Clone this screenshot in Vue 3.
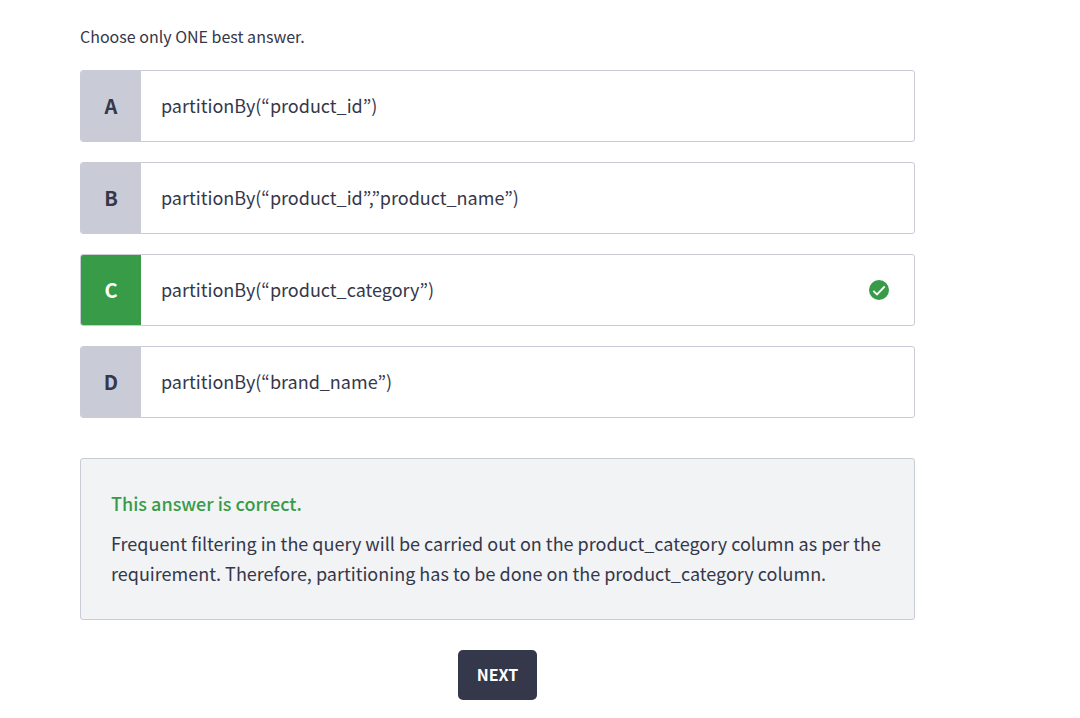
<script setup>
import { ref } from 'vue'

const selected = ref('C')
const correct = 'C'
const options = [
  { key: 'A', text: 'partitionBy(“product_id”)' },
  { key: 'B', text: 'partitionBy(“product_id”,”product_name”)' },
  { key: 'C', text: 'partitionBy(“product_category”)' },
  { key: 'D', text: 'partitionBy(“brand_name”)' }
]
</script>

<template>
  <form class="quiz" @submit.prevent>
    <fieldset class="options">
      <legend class="hint">Choose only ONE best answer.</legend>
      <label
        v-for="option in options"
        :key="option.key"
        class="option"
        :class="{ correct: option.key === correct }"
      >
        <input v-model="selected" class="radio" type="radio" name="answer" :value="option.key" />
        <span class="letter">{{ option.key }}</span>
        <span class="text">{{ option.text }}</span>
        <svg v-if="option.key === correct" class="check" viewBox="0 0 20 20" aria-hidden="true">
          <circle cx="10" cy="10" r="10" />
          <path d="M4.3 10.8 8 14.4 15.7 6.5" />
        </svg>
      </label>
    </fieldset>

    <section class="explanation">
      <h2 class="verdict">This answer is correct.</h2>
      <p class="reason">
        Frequent filtering in the query will be carried out on the product_category column as per the
        requirement. Therefore, partitioning has to be done on the product_category column.
      </p>
    </section>

    <button class="next" type="submit">NEXT</button>
  </form>
</template>

<style>
body {
  margin: 0;
  background: #fff;
}
</style>

<style scoped>
.quiz {
  box-sizing: border-box;
  display: flex;
  flex-direction: column;
  padding: 24px 165px 18px 80px;
  font-family: "Noto Sans CJK KR", "Noto Sans", sans-serif;
  font-size: 18px;
  line-height: 30px;
  color: #35374a;
}

.options {
  display: flex;
  flex-direction: column;
  gap: 20px;
  min-width: 0;
  margin: 0;
  padding: 0;
  border: 0;
}

.hint {
  padding: 0 0 22px;
  font-size: 16px;
  line-height: 24px;
}

.option {
  position: relative;
  display: flex;
  align-items: center;
  min-height: 70px;
  border: 1px solid #c9ccd6;
  border-radius: 3px;
  cursor: pointer;
}

.radio {
  position: absolute;
  width: 1px;
  height: 1px;
  margin: 0;
  opacity: 0;
}

.option:has(.radio:focus-visible) {
  outline: 2px solid #35374a;
}

.letter {
  display: flex;
  align-items: center;
  justify-content: center;
  align-self: stretch;
  width: 60px;
  border-radius: 2px 0 0 2px;
  background: #c9ccd6;
  font-size: 20px;
  font-weight: 700;
}

.correct .letter {
  background: #389b48;
  color: #fff;
}

.text {
  flex: 1;
  padding: 0 20px 2px;
}

.check {
  width: 20px;
  height: 20px;
  margin-right: 25px;
}

.check circle {
  fill: #389b48;
}

.check path {
  fill: none;
  stroke: #fff;
  stroke-width: 1.8;
}

.explanation {
  margin-top: 40px;
  padding: 29px 30px 31px;
  border: 1px solid #c9ccd6;
  border-radius: 3px;
  background: #f1f3f5;
}

.verdict {
  margin: 0 0 10px;
  font-size: 18px;
  font-weight: 500;
  color: #389b48;
}

.reason {
  margin: 0;
}

.next {
  align-self: center;
  height: 50px;
  margin-top: 30px;
  padding: 0 19px 2px;
  border: 0;
  border-radius: 5px;
  background: #35374a;
  color: #fff;
  font: inherit;
  font-size: 16px;
  font-weight: 700;
  cursor: pointer;
}
</style>
